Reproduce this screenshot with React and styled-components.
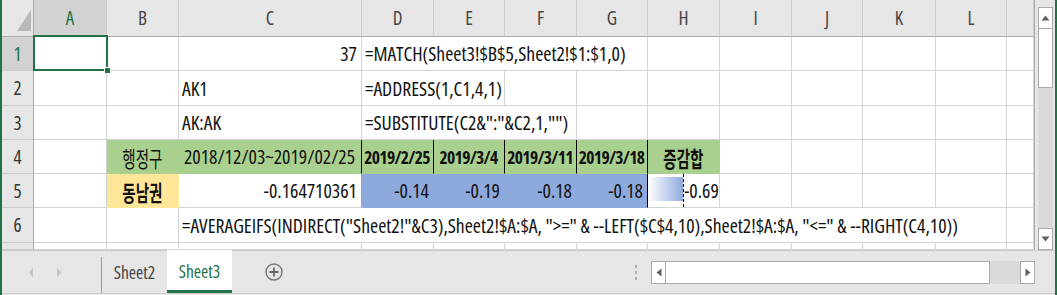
import React from "react";
import styled, { createGlobalStyle } from "styled-components";

const GREEN = "#217346";
const GRID = "#d4d4d4";
const HEAD_BG = "#e6e6e6";
const LATIN = '"Open Sans", "Liberation Sans", Arial, sans-serif';
const KR = '"Noto Sans CJK KR", "Open Sans", sans-serif';

const FILL = {
  green: "#a9d08e",
  yellow: "#ffe699",
  blue: "#8ea9db",
};

const COLS = [32, 73, 72, 183, 72, 71, 72, 71, 72, 72, 71, 73, 71, 27];
const ROWS = [37, 34, 35, 34, 34, 34, 35, 7];
const LETTERS = ["A", "B", "C", "D", "E", "F", "G", "H", "I", "J", "K", "L", ""];

const cellsByRow = {
  1: [
    { col: 3, text: "37", align: "right" },
    { col: 4, span: 4, text: "=MATCH(Sheet3!$B$5,Sheet2!$1:$1,0)" },
  ],
  2: [
    { col: 3, text: "AK1" },
    { col: 4, span: 2, text: "=ADDRESS(1,C1,4,1)" },
  ],
  3: [
    { col: 3, text: "AK:AK" },
    { col: 4, span: 3, text: '=SUBSTITUTE(C2&":"&C2,1,"")' },
  ],
  4: [
    { col: 2, text: "행정구", fill: "green", align: "center", kr: true },
    { col: 3, text: "2018/12/03~2019/02/25", fill: "green", align: "center", edge: "#000" },
    { col: 4, text: "2019/2/25", fill: "green", align: "center", bold: true, edge: "#000" },
    { col: 5, text: "2019/3/4", fill: "green", align: "center", bold: true, edge: "#000" },
    { col: 6, text: "2019/3/11", fill: "green", align: "center", bold: true, edge: "#000" },
    { col: 7, text: "2019/3/18", fill: "green", align: "center", bold: true, edge: "#000" },
    { col: 8, text: "증감합", fill: "green", align: "center", bold: true, kr: true },
  ],
  5: [
    { col: 2, text: "동남권", fill: "yellow", align: "center", bold: true, kr: true },
    { col: 3, text: "-0.164710361", align: "right", edge: FILL.blue },
    { col: 4, text: "-0.14", fill: "blue", align: "right" },
    { col: 5, text: "-0.19", fill: "blue", align: "right" },
    { col: 6, text: "-0.18", fill: "blue", align: "right" },
    { col: 7, text: "-0.18", fill: "blue", align: "right", edge: "#000" },
    { col: 8, text: "-0.69", bar: true },
  ],
  6: [
    {
      col: 3,
      span: 10,
      text: '=AVERAGEIFS(INDIRECT("Sheet2!"&C3),Sheet2!$A:$A, ">=" & --LEFT($C$4,10),Sheet2!$A:$A, "<=" & --RIGHT(C4,10))',
    },
  ],
};

const buildRow = (row) => {
  const defs = cellsByRow[row] || [];
  const out = [];
  let col = 1;
  while (col <= 13) {
    const def = defs.find((d) => d.col === col);
    if (def) {
      out.push({ ...def, span: def.span || 1 });
      col += def.span || 1;
    } else {
      out.push({ col, span: 1 });
      col += 1;
    }
  }
  return out;
};

const App = () => {
  return (
    <>
      <GlobalStyle />
      <Frame>
        <Main>
          <Sheet>
            <Corner>
              <svg width="32" height="36" viewBox="0 0 32 36">
                <polygon points="29,10 29,31 15,31" fill="#b8b8b8" />
              </svg>
            </Corner>
            {LETTERS.map((l, i) => (
              <ColHead key={i} $active={i === 0}>
                {l}
              </ColHead>
            ))}
            {[1, 2, 3, 4, 5, 6, 7].map((row) => (
              <React.Fragment key={row}>
                <RowHead $active={row === 1} $row={row + 1}>
                  {row < 7 ? row : ""}
                </RowHead>
                {buildRow(row).map((c) => (
                  <Cell
                    key={c.col}
                    $row={row + 1}
                    $col={c.col + 1}
                    $span={c.span}
                    $align={c.align || "left"}
                    $fill={c.fill && FILL[c.fill]}
                    $edge={c.edge}
                    $bold={c.bold}
                    $bar={c.bar}
                  >
                    {c.bar ? (
                      <>
                        <DataBar />
                        <BarValue>{c.text}</BarValue>
                      </>
                    ) : c.kr ? (
                      <Hangul>{c.text}</Hangul>
                    ) : (
                      c.text
                    )}
                    {row === 1 && c.col === 1 && (
                      <Selection>
                        <Handle />
                      </Selection>
                    )}
                  </Cell>
                ))}
              </React.Fragment>
            ))}
          </Sheet>
          <VScroll>
            <ArrowBox $v>
              <svg width="9" height="6" viewBox="0 0 9 6">
                <polygon points="0.5,5.5 4.5,0.5 8.5,5.5" fill="#606060" />
              </svg>
            </ArrowBox>
            <VThumb />
            <VTrack />
            <ArrowBox $v>
              <svg width="9" height="6" viewBox="0 0 9 6">
                <polygon points="0.5,0.5 4.5,5.5 8.5,0.5" fill="#606060" />
              </svg>
            </ArrowBox>
          </VScroll>
        </Main>
        <TabBar>
          <NavArrows>
            <svg width="6" height="11" viewBox="0 0 6 11">
              <polygon points="5,0.5 1,5.5 5,10.5" fill="#c4c4c4" />
            </svg>
            <svg width="6" height="11" viewBox="0 0 6 11">
              <polygon points="1,0.5 5,5.5 1,10.5" fill="#c4c4c4" />
            </svg>
          </NavArrows>
          <Tab>Sheet2</Tab>
          <Tab $active>Sheet3</Tab>
          <AddSheet>
            <svg width="18" height="18" viewBox="0 0 18 18">
              <circle cx="9" cy="9" r="8" fill="none" stroke="#777" strokeWidth="1.4" />
              <path d="M9 4.5v9M4.5 9h9" stroke="#666" strokeWidth="1.8" />
            </svg>
          </AddSheet>
          <Spacer />
          <Dots>
            <span />
            <span />
            <span />
          </Dots>
          <HScroll>
            <ArrowBox>
              <svg width="6" height="9" viewBox="0 0 6 9">
                <polygon points="5.5,0.5 0.5,4.5 5.5,8.5" fill="#606060" />
              </svg>
            </ArrowBox>
            <HThumb />
            <HTrack />
            <ArrowBox>
              <svg width="6" height="9" viewBox="0 0 6 9">
                <polygon points="0.5,0.5 5.5,4.5 0.5,8.5" fill="#606060" />
              </svg>
            </ArrowBox>
          </HScroll>
        </TabBar>
      </Frame>
    </>
  );
};

const GlobalStyle = createGlobalStyle`
  * { box-sizing: border-box; }
  body {
    margin: 0;
    background: #fff;
    font-family: ${LATIN};
    font-stretch: 75%;
  }
`;

const Frame = styled.div`
  width: 1057px;
  height: 295px;
  display: flex;
  flex-direction: column;
  background: ${HEAD_BG};
  border-left: 2px solid ${GREEN};
  border-right: 2px solid ${GREEN};
  overflow: hidden;
`;

const Main = styled.div`
  display: flex;
  height: 250px;
`;

const Sheet = styled.div`
  display: grid;
  grid-template-columns: ${COLS.map((w) => `${w}px`).join(" ")};
  grid-template-rows: ${ROWS.map((h) => `${h}px`).join(" ")};
  width: 1033px;
  border-right: 1px solid #ababab;
  background: #fff;
  font-family: ${LATIN};
  font-stretch: 75%;
`;

const Corner = styled.div`
  grid-column: 1;
  grid-row: 1;
  background: ${HEAD_BG};
  border-right: 1px solid #ababab;
  border-bottom: 1px solid #ababab;
  svg {
    display: block;
  }
`;

const ColHead = styled.div`
  grid-row: 1;
  display: flex;
  align-items: center;
  justify-content: center;
  background: ${(p) => (p.$active ? "#d2d2d2" : HEAD_BG)};
  color: ${(p) => (p.$active ? GREEN : "#444")};
  border-right: 1px solid #cdcdcd;
  border-bottom: 1px solid #ababab;
  font-size: 19px;
  padding-bottom: 1px;
`;

const RowHead = styled.div`
  grid-column: 1;
  grid-row: ${(p) => p.$row};
  display: flex;
  align-items: center;
  justify-content: center;
  background: ${(p) => (p.$active ? "#d2d2d2" : HEAD_BG)};
  color: ${(p) => (p.$active ? GREEN : "#333")};
  border-right: 1px solid #ababab;
  border-bottom: 1px solid #cdcdcd;
  font-size: 19px;
`;

const justify = { left: "flex-start", center: "center", right: "flex-end" };

const Cell = styled.div`
  grid-column: ${(p) => p.$col} / span ${(p) => p.$span};
  grid-row: ${(p) => p.$row};
  position: relative;
  min-width: 0;
  display: flex;
  align-items: center;
  justify-content: ${(p) => justify[p.$align]};
  padding: ${(p) => (p.$bar ? "2px 0 0 1px" : "0 4px 0 3px")};
  background: ${(p) => p.$fill || "#fff"};
  border-right: 1px solid ${(p) => p.$edge || p.$fill || GRID};
  border-bottom: 1px solid ${(p) => p.$fill || GRID};
  color: #111;
  font-size: ${(p) => (p.$bold ? "17.5px" : "19.7px")};
  font-weight: ${(p) => (p.$bold ? 700 : 400)};
  letter-spacing: ${(p) => (p.$bold ? "-0.7px" : "0")};
  white-space: nowrap;
`;

/* no condensed CJK face is installed, so the hangul is narrowed to match the sheet's zoomed look */
const Hangul = styled.span`
  display: inline-block;
  font-family: ${KR};
  font-size: 22px;
  letter-spacing: 0;
  transform: scaleX(0.66);
`;

const DataBar = styled.div`
  align-self: stretch;
  width: 34px;
  margin: 1px 0 6px;
  background: linear-gradient(to right, #fdfdff, #8eaadb);
  flex: none;
`;

const BarValue = styled.div`
  align-self: stretch;
  flex: 1;
  display: flex;
  align-items: center;
  justify-content: flex-end;
  padding-right: 2px;
  margin-top: -2px;
  border-left: 1px dashed #000;
`;

const Selection = styled.div`
  position: absolute;
  top: -2px;
  left: -1px;
  right: -2px;
  bottom: -1px;
  border: 2px solid ${GREEN};
  z-index: 2;
  pointer-events: none;
`;

const Handle = styled.div`
  position: absolute;
  right: -5px;
  bottom: -5px;
  width: 7px;
  height: 7px;
  background: ${GREEN};
  border: 1px solid #fff;
`;

const VScroll = styled.div`
  width: 20px;
  padding: 7px 2px 0 3px;
  display: flex;
  flex-direction: column;
`;

const ArrowBox = styled.div`
  flex: none;
  width: 15px;
  height: ${(p) => (p.$v ? "22px" : "100%")};
  display: flex;
  align-items: center;
  justify-content: center;
  background: #fff;
  border: 1px solid #ababab;
`;

const VThumb = styled.div`
  height: 59px;
  background: #fff;
  border: 1px solid #ababab;
  border-top: none;
`;

const VTrack = styled.div`
  flex: 1;
  background: #dadada;
`;

const TabBar = styled.div`
  height: 44px;
  display: flex;
  align-items: center;
  border-top: 1px solid #c6c6c6;
  border-bottom: 1px solid #cfcfcf;
  padding-right: 20px;
  font-family: ${LATIN};
  font-stretch: 75%;
`;

const NavArrows = styled.div`
  width: 99px;
  display: flex;
  gap: 22px;
  padding-left: 26px;
  align-items: center;
`;

const Tab = styled.div`
  align-self: stretch;
  width: ${(p) => (p.$active ? "65px" : "66px")};
  display: flex;
  align-items: center;
  justify-content: center;
  margin-top: ${(p) => (p.$active ? "-1px" : "6px")};
  padding-top: ${(p) => (p.$active ? "1px" : "0")};
  padding-bottom: ${(p) => (p.$active ? "0" : "6px")};
  background: ${(p) => (p.$active ? "#fff" : "transparent")};
  border-left: ${(p) => (p.$active ? "none" : "1px solid #9a9a9a")};
  border-bottom: ${(p) => (p.$active ? `3px solid ${GREEN}` : "none")};
  color: ${(p) => (p.$active ? GREEN : "#444")};
  font-size: 17.5px;
`;

const AddSheet = styled.div`
  margin-left: 33px;
  display: flex;
  svg {
    display: block;
  }
`;

const Spacer = styled.div`
  flex: 1;
`;

const Dots = styled.div`
  display: flex;
  flex-direction: column;
  gap: 3px;
  margin-right: 14px;
  span {
    width: 2px;
    height: 3px;
    background: #b0b0b0;
  }
`;

const HScroll = styled.div`
  width: 384px;
  height: 23px;
  display: flex;
`;

const HThumb = styled.div`
  width: 324px;
  background: #fff;
  border: 1px solid #ababab;
  border-left: none;
`;

const HTrack = styled.div`
  flex: 1;
  background: #dadada;
`;

export default App;
